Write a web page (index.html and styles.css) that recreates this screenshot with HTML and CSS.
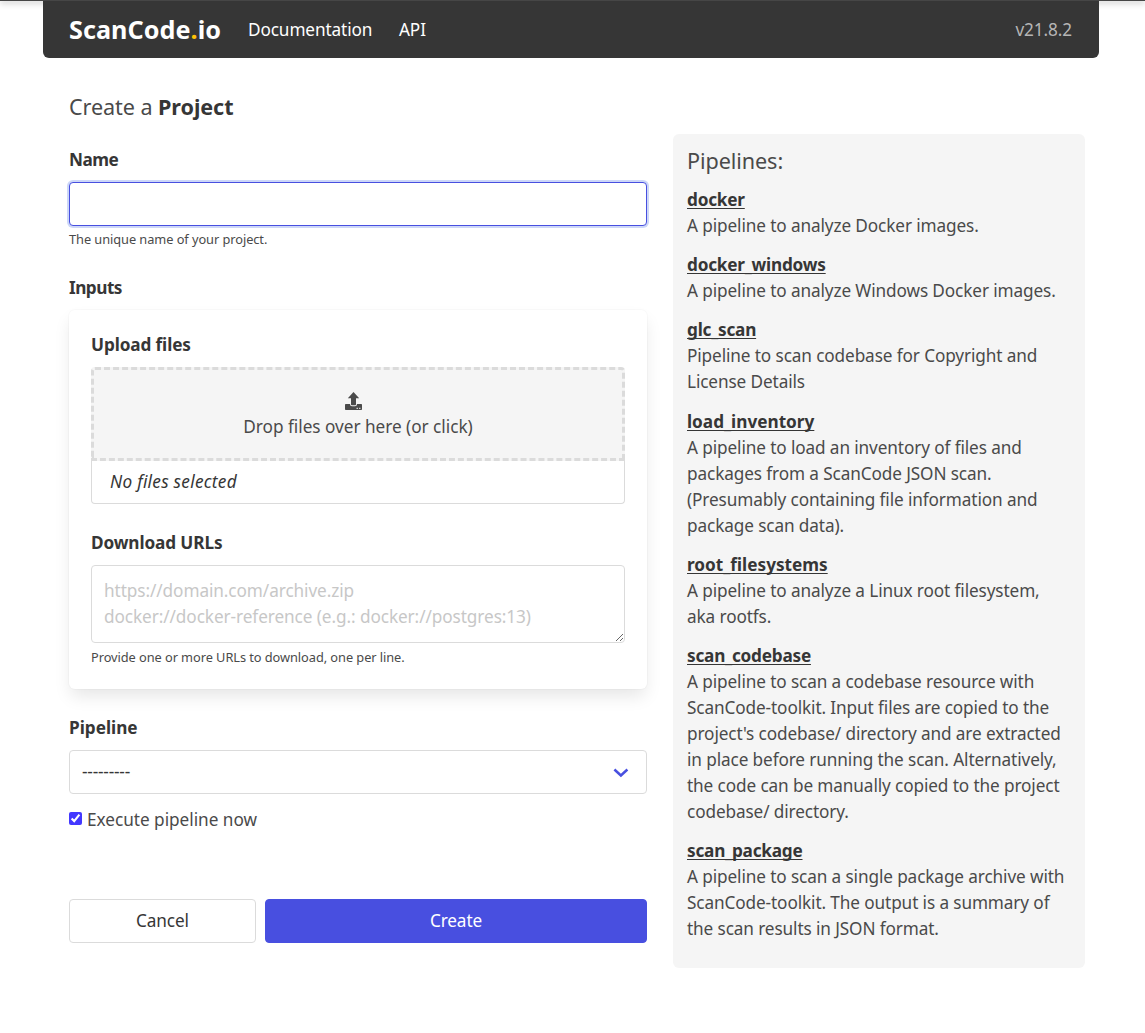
FILE: index.html
```html
<!DOCTYPE html>
<html lang="en">
<head>
<meta charset="utf-8">
<title>ScanCode.io: Create a Project</title>
<link rel="stylesheet" href="styles.css">
</head>
<body>
<div class="top-shadow"></div>
<div class="container">
  <nav class="navbar">
    <a class="brand">ScanCode<span class="dot">.</span>io</a>
    <a class="nav-docs">Documentation</a>
    <a class="nav-api">API</a>
    <span class="version">v21.8.2</span>
  </nav>
  <main class="content">
    <h1 class="title">Create a <strong>Project</strong></h1>
    <div class="columns">
      <form class="form">
        <label class="label label-name" for="name">Name</label>
        <input class="input" id="name" type="text">
        <p class="help help-name">The unique name of your project.</p>
        <div class="label label-inputs">Inputs</div>
        <section class="box">
          <div class="label label-upload">Upload files</div>
          <div class="dropzone">
            <svg class="upload-icon" viewBox="0 0 17 18"><path d="M8.5 0 L14.2 6.2 H11 V12.4 Q11 13.2 10.2 13.2 H6.8 Q6 13.2 6 12.4 V6.2 H2.8 Z"/><path fill-rule="evenodd" d="M.8 12 H5 Q5 14.2 7 14.2 H10 Q12 14.2 12 12 H16.2 Q17 12 17 12.8 V17.2 Q17 18 16.2 18 H.8 Q0 18 0 17.2 V12.8 Q0 12 .8 12 Z M11.6 15.8 V17 H12.8 V15.8 Z M14.2 15.8 V17 H15.4 V15.8 Z"/></svg>
            <span class="drop-text">Drop files over here (or click)</span>
          </div>
          <div class="file-list"><em>No files selected</em></div>
          <label class="label label-download" for="urls">Download URLs</label>
          <textarea class="textarea" id="urls" placeholder="https://domain.com/archive.zip&#10;docker://docker-reference (e.g.: docker://postgres:13)"></textarea>
          <p class="help help-urls">Provide one or more URLs to download, one per line.</p>
        </section>
        <label class="label label-pipeline" for="pipeline">Pipeline</label>
        <div class="select-wrap">
          <select class="select" id="pipeline"><option>---------</option></select>
          <svg class="chevron" viewBox="0 0 16 10"><path d="M1.4 1.5 L7.9 7.5 L14.4 1.5"/></svg>
        </div>
        <label class="check"><input class="checkbox" type="checkbox" checked><span>Execute pipeline now</span></label>
        <div class="buttons">
          <button class="button cancel" type="button">Cancel</button>
          <button class="button create" type="button">Create</button>
        </div>
      </form>
      <aside class="pipelines">
        <h2 class="subtitle">Pipelines:</h2>
        <dl class="list">
          <div><dt>docker</dt><dd>A pipeline to analyze Docker images.</dd></div>
          <div><dt>docker_windows</dt><dd>A pipeline to analyze Windows Docker images.</dd></div>
          <div><dt>glc_scan</dt><dd>Pipeline to scan codebase for Copyright and<br>License Details</dd></div>
          <div><dt class="wide">load_inventory</dt><dd>A pipeline to load an inventory of files and<br>packages from a ScanCode JSON scan.<br>(Presumably containing file information and<br>package scan data).</dd></div>
          <div><dt class="wide">root_filesystems</dt><dd>A pipeline to analyze a Linux root filesystem,<br>aka rootfs.</dd></div>
          <div><dt>scan_codebase</dt><dd>A pipeline to scan a codebase resource with<br>ScanCode-toolkit. Input files are copied to the<br>project's codebase/ directory and are extracted<br>in place before running the scan. Alternatively,<br>the code can be manually copied to the project<br>codebase/ directory.</dd></div>
          <div><dt>scan_package</dt><dd>A pipeline to scan a single package archive with<br>ScanCode-toolkit. The output is a summary of<br>the scan results in JSON format.</dd></div>
        </dl>
      </aside>
    </div>
  </main>
</div>
</body>
</html>
```
FILE: styles.css
```css
* { box-sizing: border-box; }
body, h1, h2, p, dl, dd { margin: 0; }
body {
  height: 1033px;
  overflow: hidden;
  background: #fff;
  color: #4a4a4a;
  font: 17.2px/26px "Noto Sans", "Open Sans", sans-serif;
  letter-spacing: -0.11px;
}
.top-shadow {
  position: absolute;
  top: 0;
  left: 0;
  right: 0;
  height: 1px;
  background: #464646;
  box-shadow: 0 1px 6px rgba(0, 0, 0, .8);
}
.container { position: relative; width: 1056px; margin-left: 43px; }
.navbar {
  display: flex;
  align-items: center;
  height: 58px;
  padding: 0 27px 0 26px;
  background: #363636;
  border-top: 1px solid #464646;
  border-radius: 0 0 6px 6px;
  color: #fff;
}
.brand { width: 152px; margin-right: 27px; padding-bottom: 2px; font-size: 25.2px; font-weight: 700; letter-spacing: .04px; white-space: nowrap; }
.dot { color: #ffc107; }
.nav-docs { width: 124px; margin-right: 27px; }
.version { margin-left: auto; color: #b5b5b5; }
.content { padding: 36px 14px 0 26px; }
.title, .subtitle { font-size: 21.6px; font-weight: 400; line-height: 26px; letter-spacing: -.08px; }
strong { color: #363636; font-weight: 700; }
.columns { display: flex; justify-content: space-between; align-items: flex-start; padding-top: 14px; }
.form { width: 578px; padding-top: 12px; }
.label { display: block; height: 26px; line-height: 28px; color: #363636; font-weight: 700; }
.label-name, .label-inputs { letter-spacing: -.5px; }
.input, .textarea, .select {
  display: block;
  width: 100%;
  margin: 0;
  border: 1px solid #dbdbdb;
  border-radius: 4px;
  background: #fff;
  color: #363636;
  font: inherit;
  letter-spacing: inherit;
  outline: none;
}
.input { height: 44px; margin-top: 10px; border-color: #4850e0; box-shadow: 0 0 0 2px #cdd7f8; }
.help { height: 20px; margin-top: 4px; font-size: 12.8px; line-height: 20px; letter-spacing: -.06px; }
.help-name { line-height: 18px; }
.label-inputs { margin-top: 24px; }
.box {
  height: 379px;
  margin-top: 10px;
  padding: 21px 22px 22px;
  border-radius: 6px;
  background: #fff;
  box-shadow: 0 9px 17px -2px rgba(10, 10, 10, .1), 0 0 0 1px rgba(10, 10, 10, .02);
}
.dropzone {
  display: flex;
  flex-direction: column;
  align-items: center;
  height: 94px;
  margin-top: 10px;
  padding-top: 22px;
  border: 3px dashed #dbdbdb;
  border-radius: 4px 4px 0 0;
  background: #f5f5f5;
}
.upload-icon { width: 17px; height: 18px; margin-right: 9px; fill: #4a4a4a; }
.drop-text { margin-top: 4px; letter-spacing: -.02px; }
.file-list { height: 43px; padding: 8px 18px; border: solid #dbdbdb; border-width: 0 1px 1px; border-radius: 0 0 4px 4px; color: #363636; letter-spacing: .28px; }
.label-download { margin-top: 25px; }
.textarea { height: 78px; margin-top: 10px; padding: 12px 12px 11px; resize: vertical; overflow: hidden; }
.textarea::placeholder { color: #c7c7c7; opacity: 1; letter-spacing: -.08px; }
.label-pipeline { margin-top: 25px; letter-spacing: 0; }
.select-wrap { position: relative; margin-top: 10px; }
.select { height: 44px; padding: 0 12px; appearance: none; letter-spacing: -.2px; }
.chevron { position: absolute; top: 18px; right: 18px; width: 16px; height: 10px; fill: none; stroke: #4850e0; stroke-width: 2.5; }
.check { display: flex; gap: 5px; margin-top: 13px; letter-spacing: -.02px; }
.checkbox { width: 13px; height: 13px; margin: 5px 0 0; accent-color: #4338ff; }
.buttons { display: flex; gap: 9px; margin-top: 66px; }
.button { height: 44px; padding: 0; border: 1px solid #dbdbdb; border-radius: 4px; background: #fff; color: #363636; font: inherit; letter-spacing: inherit; }
.cancel { width: 187px; }
.create { flex: 1; border-color: #484fe0; background: #484fe0; color: #fff; }
.pipelines { width: 412px; height: 834px; padding: 14px; border-radius: 6px; background: #f5f5f5; }
.list { display: flex; flex-direction: column; gap: 13.2px; margin-top: 13px; white-space: nowrap; }
dt { color: #363636; font-weight: 700; letter-spacing: -.22px; text-decoration: underline; text-decoration-skip-ink: none; text-decoration-thickness: 1px; text-underline-offset: 2px; }
dt.wide { letter-spacing: 0; }
```
